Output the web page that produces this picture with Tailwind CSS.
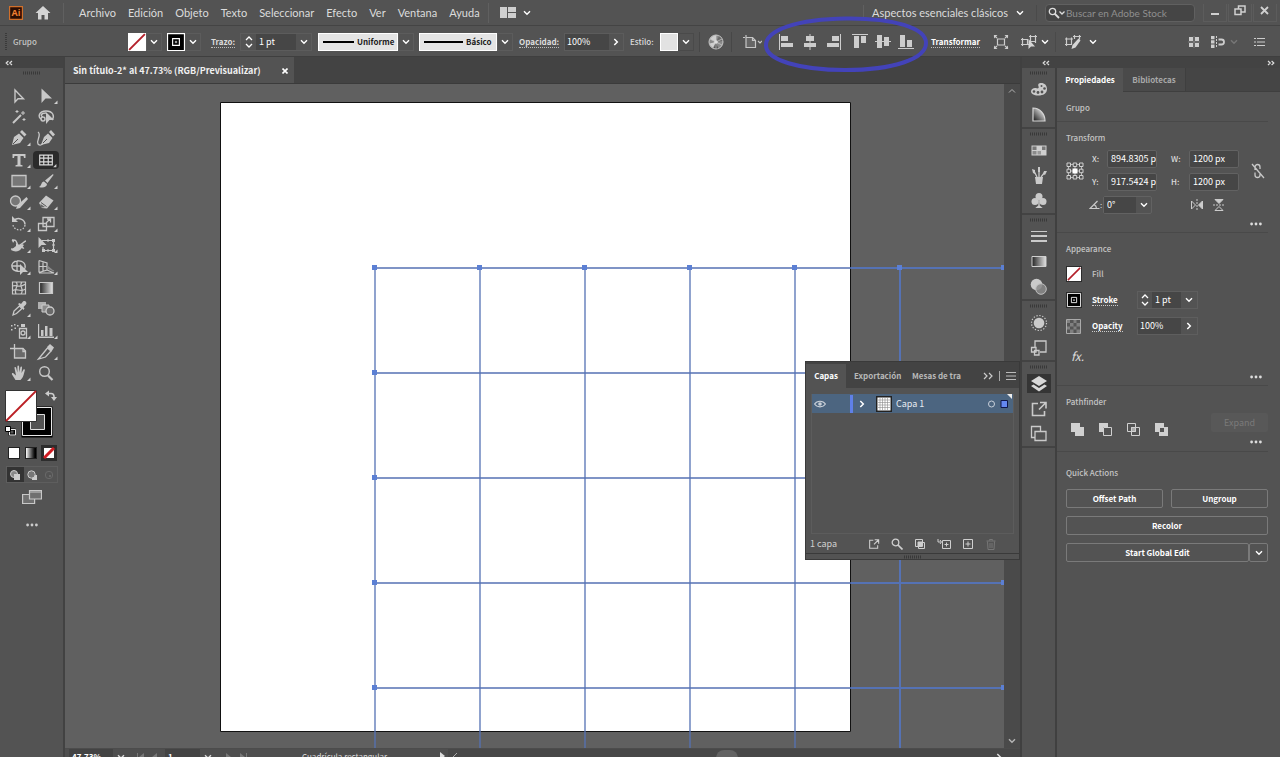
<!DOCTYPE html>
<html lang="es">
<head>
<meta charset="utf-8">
<title>Sin título-2* al 47.73% (RGB/Previsualizar)</title>
<script src="https://cdn.jsdelivr.net/npm/@tailwindcss/browser@4"></script>
</head>
<body class="h-screen overflow-hidden bg-[#535353] font-['Noto_Sans_CJK_SC','Open_Sans',sans-serif] text-[8px] leading-4 text-[#dcdcdc]">

<!-- Shared icon shapes -->
<svg class="hidden" aria-hidden="true">
  <symbol id="down" viewBox="0 0 8 6"><path d="M1 1.2 4 4.2 7 1.2" fill="none" stroke="currentColor" stroke-width="1.4"/></symbol>
  <symbol id="right" viewBox="0 0 6 8"><path d="M1.3 1 4.3 4 1.3 7" fill="none" stroke="currentColor" stroke-width="1.5"/></symbol>
  <symbol id="spin" viewBox="0 0 10 14"><path d="M2 5 5 2l3 3M2 9l3 3 3-3" fill="none" stroke="currentColor" stroke-width="1.3"/></symbol>
  <symbol id="grip" viewBox="0 0 18 4"><path d="M0 2h18" stroke="#393939" stroke-width="3" stroke-dasharray="1 1"/></symbol>
  <symbol id="dots" viewBox="0 0 12 4"><g fill="currentColor"><circle cx="1.6" cy="2" r="1.4"/><circle cx="6" cy="2" r="1.4"/><circle cx="10.4" cy="2" r="1.4"/></g></symbol>
  <symbol id="dbl" viewBox="0 0 8 6"><path d="M3.4 1 1.2 3l2.2 2M7 1 4.800 3 7 5" fill="none" stroke="currentColor" stroke-width="1.2"/></symbol>
  <symbol id="none" viewBox="0 0 16 16"><path fill="#fff" d="M0 0h16v16H0z"/><path d="M1 15 15 1" stroke="#b3202a" stroke-width="1.8"/></symbol>
  <symbol id="strk" viewBox="0 0 16 16"><path fill="#000" stroke="#fff" d="M.5.5h15v15H.5z"/><path fill="#000" stroke="#fff" d="M5 5h6v6H5z"/><path fill="#999" d="M7 7h2v2H7z"/></symbol>
  <symbol id="tri" viewBox="0 0 26 20"><path d="M24.500 14.500v3.500H21z" fill="#d0d0d0"/></symbol>
  <symbol id="export" viewBox="0 0 18 18"><path d="M8 3.500H2.500v12h12V11M10 2.500h6v6M15.500 3 9 9.500" fill="none" stroke="currentColor" stroke-width="1.600"/></symbol>
</svg>

<div class="flex h-full flex-col">

<!-- Menu bar -->
<header class="flex h-[26px] shrink-0 items-center border-b border-[#444] font-['Lato','Open_Sans',sans-serif] text-[11px]">
  <svg class="ml-[9px] h-[14px] w-[14px] shrink-0" viewBox="0 0 14 14"><path fill="#2b0d02" stroke="#d0702c" stroke-width="1.200" d="M.6.6h12.800v12.800H.6z"/><text x="7" y="10.400" text-anchor="middle" font-size="9" font-weight="700" font-family="Open Sans" fill="#f08032">Ai</text></svg>
  <button aria-label="Inicio" class="ml-3 h-4 w-4 shrink-0"><svg viewBox="0 0 16 16"><path fill="#d4d4d4" d="M8 1 .5 8H3v6.500h3.500V10h3v4.500H13V8h2.500z"/></svg></button>
  <i class="ml-3 h-5 w-px bg-[#606060]"></i>
  <nav class="ml-[15px] flex shrink-0 gap-3">
    <button>Archivo</button><button>Edición</button><button>Objeto</button><button>Texto</button><button>Seleccionar</button><button>Efecto</button><button>Ver</button><button>Ventana</button><button>Ayuda</button>
  </nav>
  <i class="ml-2 h-5 w-px bg-[#606060]"></i>
  <button aria-label="Organizar documentos" class="ml-[11px] flex items-center gap-[7px]"><svg class="h-[11px] w-[16px]" viewBox="0 0 16 11"><path fill="#cfcfcf" d="M0 0h7v11H0zM8 0h8v5H8zM8 6h8v5H8z"/></svg><svg class="h-[6px] w-2 text-white"><use href="#down"/></svg></button>
  <div class="ml-auto flex shrink-0 items-center">
    <i class="h-4 w-px bg-[#606060]"></i>
    <button class="ml-2 flex items-center gap-2"><span>Aspectos esenciales clásicos</span><svg class="h-[6px] w-2 text-white"><use href="#down"/></svg></button>
    <i class="ml-3 h-4 w-px bg-[#4a4a4a]"></i>
    <label class="ml-2 flex h-[18px] w-[150px] items-center rounded-sm border border-[#606060] bg-[#454545]">
      <svg class="ml-[2px] h-3 w-[18px] shrink-0 text-[#ddd]" viewBox="0 0 18 12" fill="none" stroke="currentColor"><circle cx="4.500" cy="4.500" r="3.200" stroke-width="1.300"/><path d="m7 7 4 4" stroke-width="1.800"/><path d="m11.500 4.500 2.500 2.500 2.500-2.500" stroke-width="1.300"/></svg>
      <input aria-label="Buscar en Adobe Stock" placeholder="Buscar en Adobe Stock" class="w-full min-w-0 text-[10px] leading-4 outline-none placeholder:text-[#8f8f8f]">
    </label>
    <div class="ml-2 mr-[3px] flex h-[18px] gap-px self-start text-[#d0d0d0]">
      <button aria-label="Minimizar" class="w-[24px] border border-t-0 border-[#5c5c5c]"><svg class="mx-auto h-4 w-4" viewBox="0 0 16 16"><path fill="currentColor" d="M4 9h8v2H4z"/></svg></button>
      <button aria-label="Restaurar" class="w-[24px] border border-t-0 border-[#5c5c5c]"><svg class="mx-auto h-4 w-4" viewBox="0 0 16 16" fill="none" stroke="currentColor" stroke-width="1.500"><path d="M3 5h6v5.500H3zM6.500 4.500V2H13v6H9.500"/></svg></button>
      <button aria-label="Cerrar" class="w-[24px] border border-t-0 border-[#5c5c5c]"><svg class="mx-auto h-4 w-4" viewBox="0 0 16 16" stroke="currentColor" stroke-width="1.800"><path d="m4 3 7 7m0-7-7 7"/></svg></button>
    </div>
  </div>
</header>

<!-- Control bar -->
<section aria-label="Control" class="relative flex h-[31px] shrink-0 items-center border-b border-[#3f3f3f] pt-[2px]">
  <svg class="ml-[5px] h-[18px] w-[2px]"><path d="M1 0v18" stroke="#3a3a3a" stroke-width="2" stroke-dasharray="1 1"/></svg>
  <span class="ml-[6px] w-[115px] shrink-0 font-medium text-[#c4c4c4]">Grupo</span>
  <button aria-label="Relleno" class="h-[18px] w-[18px] shrink-0"><svg class="h-full w-full"><use href="#none"/></svg></button>
  <button aria-label="Opciones de relleno" class="flex h-[18px] w-4 shrink-0 items-center justify-center border border-[#5c5c5c]"><svg class="h-[6px] w-2 text-white"><use href="#down"/></svg></button>
  <button aria-label="Trazo" class="ml-[5px] h-[18px] w-[18px] shrink-0"><svg class="h-full w-full"><use href="#strk"/></svg></button>
  <button aria-label="Opciones de trazo" class="flex h-[18px] w-4 shrink-0 items-center justify-center border border-[#5c5c5c]"><svg class="h-[6px] w-2 text-white"><use href="#down"/></svg></button>
  <label for="stroke-w" class="ml-[10px] w-[29px] shrink-0 font-bold leading-3"><span class="border-b border-dotted border-[#bbb]">Trazo:</span></label>
  <div class="flex h-[18px] shrink-0 items-center border border-[#5c5c5c]">
    <button aria-label="Ajustar grosor" class="w-[15px]"><svg class="mx-auto h-[14px] w-[10px] text-white"><use href="#spin"/></svg></button>
    <input id="stroke-w" value="1 pt" class="h-4 w-[40px] bg-[#464646] pl-[3px] text-[9px] text-white">
    <button aria-label="Lista de grosores" class="flex w-[15px] justify-center"><svg class="h-[6px] w-2 text-white"><use href="#down"/></svg></button>
  </div>
  <button class="ml-[6px] flex h-[18px] w-[80px] shrink-0 items-center gap-[3px] border border-white bg-[#e4e4e4] pl-1 font-bold text-[#1c1c1c]"><i class="h-[2px] w-[31px] bg-black"></i>Uniforme</button>
  <button aria-label="Perfil" class="flex h-[18px] w-4 shrink-0 items-center justify-center border border-[#5c5c5c]"><svg class="h-[6px] w-2 text-white"><use href="#down"/></svg></button>
  <button class="ml-[5px] flex h-[18px] w-[78px] shrink-0 items-center gap-[3px] border border-white bg-[#e4e4e4] pl-1 font-bold text-[#1c1c1c]"><i class="h-[2px] w-[39px] bg-black"></i>Básico</button>
  <button aria-label="Pincel" class="flex h-[18px] w-4 shrink-0 items-center justify-center border border-[#5c5c5c]"><svg class="h-[6px] w-2 text-white"><use href="#down"/></svg></button>
  <label for="opac" class="ml-[6px] w-[45px] shrink-0 font-bold leading-3"><span class="border-b border-dotted border-[#bbb]">Opacidad:</span></label>
  <div class="flex h-[18px] shrink-0 items-center border border-[#5c5c5c]">
    <input id="opac" value="100%" class="h-4 w-[44px] bg-[#464646] pl-[2px] text-[9px] text-white">
    <button aria-label="Control de opacidad" class="flex w-[14px] justify-center"><svg class="h-2 w-[6px] text-white"><use href="#right"/></svg></button>
  </div>
  <span class="ml-[6px] w-[30px] shrink-0 font-medium">Estilo:</span>
  <button aria-label="Estilo" class="h-[18px] w-[18px] shrink-0 border border-white bg-[#e2e2e2]"></button>
  <button aria-label="Lista de estilos" class="flex h-[18px] w-4 shrink-0 items-center justify-center border border-[#4a4a4a]"><svg class="h-[6px] w-2 text-white"><use href="#down"/></svg></button>
  <i class="ml-[5px] h-5 w-px bg-[#474747]"></i>
  <button aria-label="Volver a colorear" class="ml-2 h-4 w-4 shrink-0"><svg viewBox="0 0 16 16"><circle cx="8" cy="8" r="7" fill="#8a8a8a" stroke="#c6c6c6"/><path d="M8 8 8 1.500A6.500 6.500 0 0 0 2.300 5zM8 8 1.700 9.500A6.500 6.500 0 0 0 5 13.800z" fill="#cfcfcf"/><path d="M8 8 11 2.200A6.500 6.500 0 0 1 14.500 7z" fill="#6a6a6a"/><path d="M8 8l2 6.200A6.500 6.500 0 0 1 6 14z" fill="#4d4d4d"/><path d="M2 5l12 6M2 11l12-6M8 1v14" stroke="#d0d0d0" stroke-width=".7"/><circle cx="8" cy="8" r="1.800" fill="#ddd"/></svg></button>
  <i class="ml-[7px] h-5 w-px bg-[#474747]"></i>
  <button aria-label="Transformar" class="ml-[10px] h-4 w-5 shrink-0"><svg viewBox="0 0 20 16" fill="none" stroke="#c6c6c6" stroke-width="1.200"><path d="M4 1v2M1 3.500h2M4 3.500h6.500l3 3v7H4z" fill="#666"/><path d="M10.500 3.500v3h3"/><path d="m16 7 2 2 2-2"/></svg></button>
  <div class="ml-4 flex shrink-0 gap-2">
    <button aria-label="Alinear a la izquierda" class="h-4 w-4"><svg viewBox="0 0 16 16" fill="#cdcdcd"><path d="M1 0h1v16H1zM3 2h7v5H3zM3 9h12v4H3z"/></svg></button>
    <button aria-label="Centrar horizontalmente" class="h-4 w-4"><svg viewBox="0 0 16 16" fill="#cdcdcd"><path d="M7.500 0h1v16h-1zM4 2h8v5H4zM2 9h12v4H2z"/></svg></button>
    <button aria-label="Alinear a la derecha" class="h-4 w-4"><svg viewBox="0 0 16 16" fill="#cdcdcd"><path d="M14 0h1v16h-1zM6 2h7v5H6zM1 9h12v4H1z"/></svg></button>
  </div>
  <div class="ml-[10px] flex shrink-0 gap-[7px]">
    <button aria-label="Alinear arriba" class="h-4 w-4"><svg viewBox="0 0 16 16" fill="#cdcdcd"><path d="M0 0h16v1H0zM2 2h5v12H2zM9 2h5v7H9z"/></svg></button>
    <button aria-label="Centrar verticalmente" class="h-4 w-4"><svg viewBox="0 0 16 16" fill="#cdcdcd"><path d="M0 7h16v1H0zM2 1h5v13H2zM9 3h5v9H9z"/></svg></button>
    <button aria-label="Alinear abajo" class="h-4 w-4"><svg viewBox="0 0 16 16" fill="#cdcdcd"><path d="M0 14h16v1H0zM2 1h5v12H2zM9 6h5v7H9z"/></svg></button>
  </div>
  <button class="ml-[17px] w-[48px] shrink-0 text-left font-bold leading-3 text-white"><span class="border-b border-dotted border-[#bbb]">Transformar</span></button>
  <button aria-label="Aislar" class="ml-[14px] h-4 w-4 shrink-0"><svg viewBox="0 0 16 16" fill="none" stroke="#cdcdcd" stroke-width="1.200"><path d="M4.500 5h7v6h-7z"/><path d="M1 1.500l3 2.500M15 1.500 12 4M1 14.500 4 12M15 14.500 12 12"/><path d="M1 1h3.500L1 4.500zM15 1h-3.500L15 4.500zM1 15h3.500L1 11.500zM15 15h-3.500l3.500-3.500z" fill="#cdcdcd" stroke="none"/></svg></button>
  <button aria-label="Seleccionar similares" class="ml-3 flex shrink-0 items-center gap-1"><svg class="h-4 w-4" viewBox="0 0 16 16" fill="none" stroke="#cdcdcd" stroke-width="1.200"><path d="M1.500 5.500h5v5h-5zM0 5.500h2M0 10.500h8M1.500 4v8M9.500 2.500h5v5h-5zM8 2.500h8M9.500 1v3M14.500 1v8"/><path d="M7.500 5v10l2.500-2.500h4z" fill="#d6d6d6" stroke="none"/></svg><svg class="h-[6px] w-2 text-white"><use href="#down"/></svg></button>
  <i class="ml-[6px] h-5 w-px bg-[#4a4a4a]"></i>
  <button aria-label="Editar similares" class="ml-[9px] flex shrink-0 items-center gap-2"><svg class="h-4 w-4" viewBox="0 0 16 16" fill="none" stroke="#cdcdcd" stroke-width="1.200"><path d="M1.500 5h5v5.500h-5zM0 5h8M0 10.500h6M1.500 3.500V12M9.500 2.500h5v3M9.500 1v4M14.500 1v3M8 2.500h8M6.500 3.500V8"/><path d="M13.500 4.500 7.500 11 6.500 15l4-1.500 5-7z" fill="#d6d6d6" stroke="none"/></svg><svg class="h-[6px] w-2 text-white"><use href="#down"/></svg></button>
  <div class="ml-auto mr-[15px] flex shrink-0 items-center text-[#cdcdcd]">
    <button aria-label="Ajustar a cuadrícula" class="h-3 w-3"><svg viewBox="0 0 12 12" fill="currentColor"><path d="M1 1h4v4H1zM7 1h4v4H7zM1 7h4v4H1zM7 7h4v4H7z"/><path d="M0 6h12M6 0v12" stroke="#9a9a9a" stroke-width=".6"/></svg></button>
    <button aria-label="Ajustar a píxel" class="ml-[11px] h-3 w-[14px]"><svg viewBox="0 0 14 12" fill="currentColor"><path d="M0 0h3.500v3.300H0zM0 4.300h3.500v3.300H0zM0 8.600h3.500V12H0z"/><path d="M5.500 0v12" stroke="currentColor" stroke-dasharray="2 1"/><path d="M7.500 3.500h3a2.500 2.500 0 0 1 0 5h-3" fill="none" stroke="currentColor" stroke-width="1.800"/></svg></button>
    <svg class="ml-[5px] h-[6px] w-2 text-[#777]"><use href="#down"/></svg>
    <button aria-label="Menú del panel" class="ml-4 h-[10px] w-[11px]"><svg viewBox="0 0 11 10" stroke="currentColor" stroke-width="1.200"><path d="M0 1.500h2M3 1.500h8M0 5h2M3 5h8M0 8.500h2M3 8.500h8"/></svg></button>
  </div>
  <!-- Hand-drawn highlight round the align buttons -->
  <svg class="pointer-events-none absolute -top-[11px] left-[762px] z-20 h-[58px] w-[168px]" viewBox="0 0 168 58" fill="none"><path d="M4 31C3 15 36 4 84 3.500 132 3 164 13 164 28c0 16-33 27-81 27C37 55 5 45 4 31z" stroke="#4343b9" stroke-width="4"/></svg>
</section>

<main class="flex min-h-0 flex-1">

<!-- Tools -->
<aside aria-label="Herramientas" class="flex w-[65px] shrink-0 flex-col border-r-2 border-[#424242]">
  <div class="flex h-[11px] shrink-0 items-center bg-[#434343] pl-[5px]"><svg class="h-[6px] w-2 text-[#ddd]"><use href="#dbl"/></svg></div>
  <svg class="mx-auto mt-[3px] h-1 w-[18px] shrink-0"><use href="#grip"/></svg>
  <div class="mt-[10px] grid h-[299px] shrink-0 grid-cols-[27px_27px] grid-rows-14 pl-[5px] text-[#c8c8c8] [&_svg]:h-5 [&_svg]:w-[26px] [&_button]:flex [&_button]:items-center [&_button]:justify-center">
    <button aria-label="Selección"><svg viewBox="0 0 26 20"><path d="M9 4v12l3-3.200h5.500z" fill="none" stroke="currentColor" stroke-width="1.400"/></svg></button>
    <button aria-label="Selección directa"><svg viewBox="0 0 26 20"><path d="M8.500 2.500v14.500l4-4.500h6.500z" fill="currentColor"/><use href="#tri"/></svg></button>
    <button aria-label="Varita mágica"><svg viewBox="0 0 26 20" stroke="currentColor"><path d="M7 16 15 8" stroke-width="2"/><path d="M17 4v4M15 6h4M11 3v3M9.500 4.500h3M18 11v3M16.500 12.500h3" stroke-width="1"/></svg></button>
    <button aria-label="Lazo"><svg viewBox="0 0 26 20"><path d="M9 13c-5-3-3-9 4-9s9 5 6 9M10 10a2 2 0 1 0 0 4 2 2 0 0 0 0-4c-3-1-2-4 3-4" fill="none" stroke="currentColor" stroke-width="1.400"/><path d="M13 5v12l3.500-4H21z" fill="currentColor"/></svg></button>
    <button aria-label="Pluma"><svg viewBox="0 0 26 20"><path d="m6 17 2-8 5-3.500 4.500 4.500-3.500 5zM14 4l2-2 4.500 4.500-2 2z" fill="currentColor"/><path d="m7 16 5-5" stroke="#535353"/><use href="#tri"/></svg></button>
    <button aria-label="Curvatura"><svg viewBox="0 0 26 20"><path d="m8 17 3-8 4-3.500 4.500 4.500-3.500 5zM16 4l2-2 4 4.500-2 2z" fill="currentColor"/><path d="m9 16 5-5" stroke="#535353"/><path d="M5 4c4 3-2 8 0 12 2 2 4 1 5-1" fill="none" stroke="currentColor" stroke-width="1.300"/></svg></button>
    <button aria-label="Texto"><svg viewBox="0 0 26 20"><path d="M6.500 4h13v4H18l-.5-2H14.500v8.800l2 .4V16.500h-7v-1.300l2-.4V6H8.500L8 8H6.500z" fill="currentColor"/><use href="#tri"/></svg></button>
    <button aria-label="Cuadrícula rectangular" aria-pressed="true" class="flex"><svg class="h-[18px]! rounded-sm bg-[#2b2b2b]" viewBox="0 0 26 20"><path d="M6 4.500h14v11H6zM10.500 4.500v11M15.500 4.500v11M6 8h14M6 12h14" fill="none" stroke="#dcdcdc" stroke-width="1.300"/><use href="#tri"/></svg></button>
    <button aria-label="Rectángulo"><svg viewBox="0 0 26 20"><path d="M6 4.500h14v11H6z" fill="#777" stroke="currentColor" stroke-width="1.300"/><use href="#tri"/></svg></button>
    <button aria-label="Pincel"><svg viewBox="0 0 26 20"><path d="M20 3 12 9.500l2.500 2.500L20.500 4zM11 10.500c-3 0-2 4-5 5.500 4 1.500 8 0 8-3z" fill="currentColor"/><use href="#tri"/></svg></button>
    <button aria-label="Shaper"><svg viewBox="0 0 26 20"><circle cx="9.500" cy="9" r="5" fill="#777" stroke="currentColor" stroke-width="1.300"/><path d="m20.500 5-9 8-1.500 4 4-1 8-9z" fill="currentColor"/><use href="#tri"/></svg></button>
    <button aria-label="Borrador"><svg viewBox="0 0 26 20"><path d="m6 11 7-7.500 7.500 5L14 16.500 9 16z" fill="currentColor"/><path d="m8 10.500 5.500 4" stroke="#535353"/><path d="m7.500 12 4.500 3-2.500.500-2-1z" fill="#666"/><use href="#tri"/></svg></button>
    <button aria-label="Rotar"><svg viewBox="0 0 26 20" fill="none" stroke="currentColor"><path d="M8 6.500c4-4 11-1 11 4" stroke-width="1.500"/><path d="M19 11c-1 7-11 6-12 0" stroke-width="1.300" stroke-dasharray="1.500 1.500"/><path d="M6 2v6h6z" fill="currentColor" stroke="none"/><use href="#tri" stroke="none"/></svg></button>
    <button aria-label="Escala"><svg viewBox="0 0 26 20" fill="none" stroke="currentColor" stroke-width="1.300"><path d="M10 3.500h11v9H10z"/><path d="M5.500 9.500h8v7h-8z"/><path d="m13 9 4-4M14 5h3.500v3.500"/><use href="#tri" stroke="none"/></svg></button>
    <button aria-label="Anchura"><svg viewBox="0 0 26 20"><path d="M6 6c5-3 4 2 6 4s6-4 8-4M5 14c6 1 7-2 9-3s2 3 4 2" fill="none" stroke="currentColor" stroke-width="1.400"/><path d="M5 15c3 2 8 2 10-1l3-4-2-1-3 2-2-2-1-1 0 3zM6 4l3 1-2 3z" fill="currentColor"/><use href="#tri"/></svg></button>
    <button aria-label="Transformación libre"><svg viewBox="0 0 26 20"><path d="M9 5.500h11.500v10H10V12" fill="none" stroke="currentColor" stroke-width="1.200"/><path d="M5.500 2v11l3-3h5z" fill="currentColor"/><path d="M19 4h3v3h-3zM19 14h3v3h-3zM9 14h3v3H9zM14 14.500h2v2h-2zM19.500 9h2v2h-2zM14 4.500h2v2h-2z" fill="currentColor"/><use href="#tri"/></svg></button>
    <button aria-label="Creador de formas"><svg viewBox="0 0 26 20"><path d="M11 4c6-1 9 3 8 7-3 5-12 4-13-1-1-3 2-6 5-6zM6 9h9M11 4v10" fill="none" stroke="currentColor" stroke-width="1.300"/><path d="M14 7v11l3-3h5z" fill="currentColor"/><use href="#tri"/></svg></button>
    <button aria-label="Perspectiva"><svg viewBox="0 0 26 20" fill="none" stroke="currentColor" stroke-width="1.200"><path d="M6 3.500v12M6 3.500l8 2.500v7l-8 2.500M10 4.500v10M6 9.500h8M14 13l7 3H6"/><path d="M14 9l5 4M14 11l7 3" stroke="#8a8a8a"/><use href="#tri" stroke="none"/></svg></button>
    <button aria-label="Malla"><svg viewBox="0 0 26 20" fill="none" stroke="currentColor" stroke-width="1.200"><path d="M6.500 4h13v12h-13zM6.500 8c5-2 6 3 13-2M6.500 13c3-4 8 2 13-2M10 4c4 4-3 7 0 12M16 4c-4 4 3 7-1 12"/></svg></button>
    <button aria-label="Degradado"><svg viewBox="0 0 26 20"><defs><linearGradient id="g1"><stop stop-color="#222"/><stop offset="1" stop-color="#e4e4e4"/></linearGradient></defs><path d="M6.500 4.500h13v11h-13z" fill="url(#g1)" stroke="currentColor" stroke-width="1.200"/></svg></button>
    <button aria-label="Cuentagotas"><svg viewBox="0 0 26 20"><path d="m7 16 1-4 5.500-5 2.500 2.500-5.500 5z" fill="none" stroke="currentColor" stroke-width="1.300"/><path d="m12 5 1.500-1 1.500 1 2-2.500c2-1.500 4.500 1 3 3L17.500 8l1 1.500-1 1.500z" fill="currentColor"/><use href="#tri"/></svg></button>
    <button aria-label="Fusión"><svg viewBox="0 0 26 20"><path d="M5 3h8v7H5z" fill="#b0b0b0"/><path d="M9 6h7v7H9z" fill="#8a8a8a" stroke="#ccc"/><circle cx="17" cy="12" r="4" fill="#6a6a6a" stroke="#ccc" stroke-width="1.300"/></svg></button>
    <button aria-label="Rociar símbolos"><svg viewBox="0 0 26 20"><path d="M5 4h1.500v1.500H5zM8 3h1.500v1.500H8zM5 8h1.500v1.500H5zM8.500 6.500H10V8H8.500zM11 4h1.500v1.500H11zM15 3h4v3h-4z" fill="currentColor"/><path d="M13.500 7.500h7v9.500h-7z" fill="none" stroke="currentColor" stroke-width="1.300"/><circle cx="17" cy="12" r="2" fill="none" stroke="currentColor" stroke-width="1.300"/><use href="#tri"/></svg></button>
    <button aria-label="Gráfica"><svg viewBox="0 0 26 20" fill="currentColor"><path d="M5 3h1.200v12.500H21V17H5zM8 9h2.500v6H8zM12 5h2.500v10H12zM16.500 7h3v8h-3z"/><use href="#tri"/></svg></button>
    <button aria-label="Mesa de trabajo"><svg viewBox="0 0 26 20" fill="none" stroke="currentColor" stroke-width="1.300"><path d="M8.500 6.500H17l2.500 2.500v7h-11z" fill="#6a6a6a"/><path d="M8.500 2v4.500H4M17 6.500v3h3"/></svg></button>
    <button aria-label="Sector"><svg viewBox="0 0 26 20"><path d="m5.500 17 9-11 3.500 3-5.500 6z" fill="none" stroke="currentColor" stroke-width="1.300"/><path d="m14 5 3-3 4 3.500-2.500 4z" fill="currentColor"/><use href="#tri"/></svg></button>
    <button aria-label="Mano"><svg viewBox="0 0 26 20"><path d="M9.500 17 6 11.500c-.6-1.200.7-2 1.600-1L10 12.500 8.500 5c-.2-1.300 1.300-1.500 1.600-.3l1.300 4.800V3.500c0-1.200 1.600-1.200 1.700 0l.3 5.800 1-5c.3-1.100 1.700-.8 1.600.4l-.5 5.300 1.800-3.200c.7-1 1.900-.3 1.500.8-1 3.400-1.500 7.400-4.300 9.400z" fill="currentColor"/><use href="#tri"/></svg></button>
    <button aria-label="Zoom"><svg viewBox="0 0 26 20" fill="none" stroke="currentColor"><circle cx="11.500" cy="8.500" r="4.800" stroke-width="1.400"/><path d="m15 12.500 4.500 4.500" stroke-width="2.200"/></svg></button>
  </div>
  <!-- Fill, stroke, colour, draw and screen modes -->
  <svg class="mt-[5px] h-[50px] w-[62px] shrink-0" viewBox="0 0 62 50" role="img" aria-label="Relleno y trazo"><path fill="#000" d="M21.500 17.500h31v31h-31z"/><path d="M22.500 18.500h29v28h-29z" fill="#000" stroke="#e8e8e8"/><path fill="#535353" stroke="#ddd" d="M30.500 25.500h14v15h-14z"/><path fill="#fff" stroke="#333" d="M5.500 1.500h31v31h-31z"/><path d="M6 32 36 2" stroke="#bb1f24" stroke-width="1.800"/><path d="M47 4.500h4q3 0 3 3V9" fill="none" stroke="#ccc" stroke-width="1.600"/><path d="M49 1.500v6l-4-3zM51 8h6l-3 4z" fill="#ccc"/><path d="M9.500 40.500h5v5h-5z" fill="none" stroke="#000" stroke-width="2"/><path d="M5.500 37.500h5v5h-5z" fill="#fff" stroke="#000"/><path d="M11 40.500h4.500v5.500h-6v-3" fill="none" stroke="#eee"/></svg>
  <div class="ml-[5px] mt-[5px] grid h-[18px] w-[53px] shrink-0 grid-cols-3 place-items-center">
    <button aria-label="Color" class="h-3 w-3 border border-[#222] bg-white"></button>
    <button aria-label="Degradado" class="h-3 w-3 border border-[#222] bg-linear-to-r from-white to-black"></button>
    <button aria-label="Ninguno" class="flex h-4 w-4 items-center justify-center bg-[#2d2d2d]"><svg class="h-3 w-3" viewBox="0 0 12 12"><path fill="#fff" d="M1 1h10v10H1z"/><path d="m1 11 10-10" stroke="#d01c22" stroke-width="3"/></svg></button>
  </div>
  <div class="ml-[6px] mt-1 grid h-[17px] w-[52px] shrink-0 grid-cols-3 border border-[#5e5e5e] [&_svg]:mx-auto [&_svg]:h-[14px] [&_svg]:w-[14px]">
    <button aria-label="Dibujo normal" class="bg-[#333]"><svg viewBox="0 0 14 14"><circle cx="6" cy="6" r="3.500" fill="#888" stroke="#ccc"/><path fill="#ccc" d="M6 6h6v6H6z"/></svg></button>
    <button aria-label="Dibujo por detrás"><svg viewBox="0 0 14 14"><path fill="#ccc" d="M7 7h5v5H7z"/><circle cx="6.500" cy="6.500" r="3.700" fill="#777" stroke="#ccc"/></svg></button>
    <button aria-label="Dibujo por dentro"><svg viewBox="0 0 14 14"><circle cx="7" cy="7" r="3.700" fill="none" stroke="#696969"/><path fill="#696969" d="M7 7h2v2H7z"/></svg></button>
  </div>
  <button aria-label="Modo de pantalla" class="mx-auto mt-[6px] h-4 w-5"><svg viewBox="0 0 20 16" fill="#707070" stroke="#c8c8c8" stroke-width="1.200"><path d="M.6 5.500h12v9H.6z"/><path d="M7.500 1.500h12v8.500h-12zM7.500 3h12"/></svg></button>
  <button aria-label="Editar barra de herramientas" class="mx-auto mt-[18px] h-1 w-3 text-[#ccc]"><svg class="h-1 w-3"><use href="#dots"/></svg></button>
</aside>

<!-- Document -->
<section class="flex min-w-0 flex-1 flex-col">
  <div class="flex h-[27px] shrink-0 items-center border-b border-[#3b3b3b] bg-[#434343]">
    <div class="flex h-full items-center bg-[#535353] pl-2 pr-[6px] pt-[2px] text-[9px] font-bold text-[#f0f0f0]"><button class="w-[209px] whitespace-nowrap text-left">Sin título-2* al 47.73% (RGB/Previsualizar)</button><button aria-label="Cerrar documento" class="flex h-3 w-[6px] items-center"><svg class="h-[6px] w-[6px]" viewBox="0 0 6 6" stroke="#fff" stroke-width="1.600"><path d="m.5.5 5 5m0-5-5 5"/></svg></button></div>
  </div>
  <div class="relative flex min-h-0 flex-1">
    <svg class="h-full min-w-0 flex-1 bg-[#606060]" role="img" aria-label="Mesa de trabajo con cuadrícula rectangular">
      <path d="M155.500 18.500h630v629h-630z" fill="#fff" stroke="#111"/>
      <g stroke="#5572b4" stroke-width="1.300" fill="none">
        <path d="M310 184h630M310 289h630M310 394h630M310 499h630M310 604h630"/>
        <path d="M310 184v480M415 184v480M520 184v480M625 184v480M730 184v480"/>
        <path d="M835 184v480M786 184h154M786 499h154M786 604h154" stroke-width="2"/>
      </g>
      <path fill="#5c80d4" d="M307 181h5v5h-5zM412 181h5v5h-5zM517 181h5v5h-5zM622 181h5v5h-5zM727 181h5v5h-5zM832 181h5v5h-5zM936 181h5v5h-5zM307 286h5v5h-5zM307 391h5v5h-5zM307 496h5v5h-5zM307 601h5v5h-5zM936 496h5v5h-5zM936 601h5v5h-5z"/>
    </svg>
    <div class="flex w-4 shrink-0 flex-col items-center justify-between bg-[#4a4a4a] py-1 text-[#b5b5b5]">
      <button aria-label="Desplazar arriba" class="flex"><svg class="h-[6px] w-2" viewBox="0 0 8 6"><path d="m1 4.500 3-3 3 3" fill="none" stroke="currentColor"/></svg></button>
      <button aria-label="Desplazar abajo" class="flex"><svg class="h-[6px] w-2"><use href="#down"/></svg></button>
    </div>

    <!-- Layers, floating over the canvas -->
    <section aria-label="Capas" class="absolute right-0 top-[277px] z-10 w-[215px] border border-[#3a3a3a] bg-[#535353]">
      <div class="flex h-[26px] items-center bg-[#434343] pt-[2px] font-bold text-[#b8b8b8]">
        <button class="h-full w-10 shrink-0 bg-[#535353] text-white">Capas</button>
        <button class="ml-2 w-[51px] shrink-0 whitespace-nowrap text-left">Exportación</button>
        <button aria-label="Mesas de trabajo" class="ml-[7px] w-[51px] shrink-0 whitespace-nowrap text-left">Mesas de tra</button>
        <svg class="ml-5 h-2 w-[10px] shrink-0" viewBox="0 0 10 8" fill="none" stroke="#ccc" stroke-width="1.200"><path d="m1 1 3 3-3 3M6 1l3 3-3 3"/></svg>
        <i class="ml-[6px] h-[10px] w-px bg-[#aaa]"></i>
        <button aria-label="Menú de capas" class="ml-[6px] h-2 w-[10px]"><svg viewBox="0 0 10 8" stroke="#bbb"><path d="M0 .5h10M0 4h10M0 7.500h10"/></svg></button>
      </div>
      <div class="mx-[5px] mt-[6px] h-[140px] border border-t-0 border-[#5c5c5c]">
        <div class="relative flex h-[19px] items-center bg-[#4c6580] text-[9px] text-[#e6eaf0]">
          <button aria-label="Visibilidad" class="ml-[2px] h-2 w-3"><svg viewBox="0 0 12 8"><path d="M.6 4C3 .3 9 .3 11.400 4 9 7.700 3 7.700.6 4z" fill="none" stroke="#c9d0d8" stroke-width="1.200"/><circle cx="6" cy="4" r="1.800" fill="#c9d0d8"/></svg></button>
          <i class="ml-[24px] h-[18px] w-[3px] bg-[#5f80e8]"></i>
          <button aria-label="Expandir capa" class="ml-[6px] flex h-2 w-[6px]"><svg class="h-2 w-[6px] text-white"><use href="#right"/></svg></button>
          <svg class="ml-[11px] h-4 w-4" viewBox="0 0 16 16"><path fill="#fff" stroke="#222" stroke-width="1.500" d="M.7.7h14.600v14.600H.7z"/><path d="M4 2v12M6.500 2v12M9 2v12M11.500 2v12M2 4h12M2 6.500h12M2 9h12M2 11.500h12" stroke="#8a8a8a" stroke-width=".6"/></svg>
          <span class="ml-1">Capa 1</span>
          <svg class="ml-auto mr-[5px] h-2 w-5" viewBox="0 0 20 8"><circle cx="3.500" cy="4" r="3" fill="none" stroke="#c8d0da"/><path fill="#6488f0" stroke="#10184a" d="M13 .5h6.500v7H13z"/></svg>
          <svg class="absolute right-0 top-0 h-[6px] w-[6px]"><path fill="#eee" d="M0 0h5v5z"/></svg>
        </div>
      </div>
      <div class="flex h-[19px] items-center pl-1 text-[#cfcfcf]">
        <span class="w-[58px] shrink-0 text-[9px]">1 capa</span>
        <div class="flex items-center gap-[11px] [&_svg]:h-3 [&_svg]:w-3" >
          <button aria-label="Recopilar para exportación"><svg><use href="#export"/></svg></button>
          <button aria-label="Localizar objeto"><svg viewBox="0 0 12 12" fill="none" stroke="currentColor"><circle cx="4.500" cy="4.500" r="3.300" stroke-width="1.300"/><path d="m7 7 4.500 4.500" stroke-width="1.700"/></svg></button>
          <button aria-label="Máscara de recorte"><svg viewBox="0 0 12 12" fill="none" stroke="currentColor"><path d="M1.500 1.500h7v7h-7z"/><path d="M4.500 4.500h6v6h-6z"/><path fill="currentColor" d="M4 4h4v4H4z"/></svg></button>
          <button aria-label="Nueva subcapa"><svg class="w-[14px]!" viewBox="0 0 14 12" fill="none" stroke="currentColor"><path d="M5.500 2.500h8v8h-8zM9.500 4.500v4M7.500 6.500h4M1 1v3h3M3 2l1.500 2L3 6"/></svg></button>
          <button aria-label="Nueva capa"><svg viewBox="0 0 12 12" fill="none" stroke="currentColor"><path d="M1.500 1.500h9v9h-9zM6 3.500v5M3.500 6h5"/></svg></button>
          <button aria-label="Eliminar" disabled class="text-[#777]"><svg viewBox="0 0 12 12" fill="none" stroke="currentColor"><path d="M1.500 3h9M4.500 2.500v-1h3v1M2.500 3.500l.5 8h6l.5-8M5 5v5M7 5v5"/></svg></button>
        </div>
      </div>
      <div class="flex h-[6px] items-center border-t border-[#3a3a3a]"><svg class="mx-auto h-1 w-[18px]"><use href="#grip"/></svg></div>
    </section>
  </div>
  <footer class="flex h-[9px] shrink-0 items-start overflow-hidden border-t border-[#4c4c4c] bg-[#4e4e4e]">
    <input aria-label="Nivel de zoom" value="47.73%" class="ml-1 h-4 w-[44px] bg-[#434343] pl-[3px] font-bold text-white">
    <svg class="ml-1 mt-[5px] h-[6px] w-2 shrink-0"><use href="#down"/></svg>
    <span class="ml-3 w-[26px] shrink-0 text-[#777]"><svg class="mt-1 h-2 w-[22px]" viewBox="0 0 22 8" fill="currentColor"><path d="M0 0h1v8H0zM7 0v8L2 4zM20 0v8l-5-4z"/></svg></span>
    <input aria-label="Mesa de trabajo" value="1" class="ml-[2px] h-4 w-[35px] bg-[#434343] pl-[3px] font-bold text-white">
    <svg class="ml-1 mt-[5px] h-[6px] w-2 shrink-0"><use href="#down"/></svg>
    <svg class="ml-[14px] mt-1 h-2 w-[22px] shrink-0" viewBox="0 0 22 8" fill="#777"><path d="M0 0v8l5-4zM14 0v8l5-4zM20 0h1v8h-1z"/></svg>
    <span class="ml-[54px] w-[136px] shrink-0 whitespace-nowrap text-[#ddd]">Cuadrícula rectangular</span>
    <svg class="mt-[3px] h-2 w-[10px] shrink-0"><path d="M2 0v8l5-4z" fill="#ddd"/></svg>
    <div class="flex h-full min-w-0 flex-1 items-start bg-[#484848] pl-1">
      <svg class="mt-1 h-2 w-[6px]"><path d="M5 0 1 4l4 4" fill="none" stroke="#aaa"/></svg>
      <i class="ml-auto mr-[258px] mt-px h-4 w-[22px] rounded-full bg-[#626262]"></i>
      <svg class="mr-[18px] mt-1 h-2 w-[6px]"><use href="#right"/></svg>
    </div>
  </footer>
</section>

<!-- Dock and properties -->
<div class="flex w-[260px] shrink-0 flex-col border-l-2 border-[#404040]">
  <div class="flex h-[11px] shrink-0 items-center justify-between bg-[#434343] pl-5 pr-[5px] text-[#ddd]"><svg class="h-[6px] w-2"><use href="#dbl"/></svg><svg class="h-[6px] w-2" viewBox="0 0 8 6"><path d="m1 1 2.200 2L1 5M4.600 1l2.200 2-2.200 2" fill="none" stroke="currentColor" stroke-width="1.200"/></svg></div>
  <div class="flex min-h-0 flex-1">
    <aside aria-label="Paneles" class="w-[35px] shrink-0 border-r-2 border-[#404040] text-[#cacaca] [&_button]:mx-auto [&_button]:flex [&_button]:h-[25px] [&_button]:w-6 [&_button]:items-center [&_button]:justify-center [&_button_svg]:h-[18px] [&_button_svg]:w-[18px] [&>div]:border-b-2 [&>div]:border-[#434343]">
      <div>
        <div class="h-[9px] pt-[3px]"><svg class="mx-auto h-1 w-[18px]"><use href="#grip"/></svg></div>
        <button aria-label="Color"><svg viewBox="0 0 18 18"><path d="M9 2.500c4-1.500 8 1 8 5.500s-4 6.500-8.500 6.500c-5 0-7.500-2-7.500-4S3 7 5 7s2.500 1 3.500 0-1.500-3 .5-4.500z" fill="currentColor"/><g fill="#535353"><circle cx="4" cy="10.500" r="1.300"/><circle cx="8" cy="11.500" r="1.400"/><circle cx="12" cy="11" r="1.400"/><circle cx="14.500" cy="7.500" r="1.300"/><circle cx="11.500" cy="5" r="1"/></g></svg></button>
        <button aria-label="Guía de color"><svg viewBox="0 0 18 18"><defs><linearGradient id="g2" x1="0" y1="1" x2="1" y2="0"><stop stop-color="#111"/><stop offset=".8" stop-color="#ddd"/></linearGradient></defs><path d="M3 2c7 0 12 6 12 13H3z" fill="url(#g2)" stroke="#d6d6d6" stroke-width="1.200"/></svg></button>
      </div>
      <div>
        <div class="h-[9px] pt-[3px]"><svg class="mx-auto h-1 w-[18px]"><use href="#grip"/></svg></div>
        <button aria-label="Muestras"><svg viewBox="0 0 18 18"><path d="M1.500 3.500h15v10h-15z" fill="#cfcfcf"/><path fill="#777" d="M2.500 4.500h4v3.500h-4zM12 4.500h3.500v3.500H12z"/><path fill="#999" d="M7.500 9h3.500v3.500H7.500z"/><path fill="#8a8a8a" d="M2.500 9h4v3.500h-4z"/></svg></button>
        <button aria-label="Pinceles"><svg viewBox="0 0 18 18"><path d="M5 10h8l-1 7H6z" fill="currentColor"/><path d="M7 10 4 4M9 10V3M11 10l4-5" stroke="currentColor" stroke-width="1.300"/><path d="M2 2l3 1v4L3 6zM8 0h2v5H8zM14 4l3 0-2 4-2-1z" fill="currentColor"/></svg></button>
        <button aria-label="Símbolos"><svg viewBox="0 0 18 18" fill="currentColor"><circle cx="9" cy="4.500" r="3.500"/><circle cx="5" cy="9.500" r="3.500"/><circle cx="13" cy="9.500" r="3.500"/><path d="M8.300 7h1.400v6.500l3 2.500h-7.400l3-2.500z"/></svg></button>
      </div>
      <div>
        <div class="h-[9px] pt-[3px]"><svg class="mx-auto h-1 w-[18px]"><use href="#grip"/></svg></div>
        <button aria-label="Trazo"><svg viewBox="0 0 18 18" fill="currentColor"><path d="M1 3h16v1H1zM1 7h16v2H1zM1 12h16v2H1z"/></svg></button>
        <button aria-label="Degradado"><svg viewBox="0 0 18 18"><path d="M2 3.500h14v10H2z" fill="url(#g1)" stroke="#d0d0d0"/></svg></button>
        <button aria-label="Transparencia"><svg viewBox="0 0 18 18"><circle cx="6.500" cy="6.500" r="5.800" fill="currentColor"/><circle cx="11" cy="11" r="5.300" fill="#8a8a8a" fill-opacity=".85" stroke="#c0c0c0"/></svg></button>
      </div>
      <div>
        <div class="h-[9px] pt-[3px]"><svg class="mx-auto h-1 w-[18px]"><use href="#grip"/></svg></div>
        <button aria-label="Apariencia"><svg viewBox="0 0 18 18"><circle cx="9" cy="9" r="5.300" fill="currentColor"/><circle cx="9" cy="9" r="7.500" fill="none" stroke="currentColor" stroke-width="1.200" stroke-dasharray="1.300 1.650"/></svg></button>
        <button aria-label="Estilos gráficos"><svg viewBox="0 0 18 18" fill="none" stroke="currentColor" stroke-width="1.300"><path d="M5 8V2h11v11h-6M1.500 8.500h4.500v4.500H1.500z"/><path d="M4.500 11.500H9v4.500H4.500z"/></svg></button>
      </div>
      <div>
        <div class="h-[9px] pt-[3px]"><svg class="mx-auto h-1 w-[18px]"><use href="#grip"/></svg></div>
        <button aria-label="Capas" aria-pressed="true" class="bg-[#353535] bg-clip-content py-[3px]"><svg viewBox="0 0 18 18" fill="#d8d8d8"><path d="m9 1 8 5-8 5-8-5zM3.500 9.500 9 13l5.500-3.500L17 11l-8 5.500L1 11z"/></svg></button>
        <button aria-label="Exportación de recursos"><svg><use href="#export"/></svg></button>
        <button aria-label="Mesas de trabajo"><svg viewBox="0 0 18 18" fill="none" stroke="currentColor" stroke-width="1.300"><path d="M5 12.500H1.500v-11h9v5M5 6.500h11v9H5z"/></svg></button>
      </div>
    </aside>

    <section aria-label="Propiedades" class="flex min-w-0 flex-1 flex-col">
      <div class="flex h-6 shrink-0 bg-[#454545] font-bold text-[#a8a8a8]">
        <button class="w-[66px] bg-[#535353] text-white">Propiedades</button>
        <button class="w-[63px] border-b border-r border-[#3f3f3f] bg-[#4a4a4a]">Bibliotecas</button>
        <i class="flex-1 border-b border-[#3f3f3f]"></i>
      </div>
      <div class="mr-3 border-b border-[#494949] pb-[5px] pl-[9px] pt-2 font-medium text-[#c4c4c4]">Grupo</div>

      <div class="mr-3 border-b border-[#494949] pl-[9px] pt-2">
        <h2 class="font-medium text-[#c4c4c4]">Transform</h2>
        <div class="mt-px flex items-center">
          <button aria-label="Punto de referencia" class="mb-[22px] h-[18px] w-[18px]"><svg viewBox="0 0 18 18" fill="none" stroke="#d0d0d0"><path d="M3 2.500h12M3 9h12M3 15.500h12M2.500 3v12M9 3v12M15.500 3v12" stroke-width=".8"/><path fill="#535353" d="M1 1h3.500v3.500H1zM7.200 1h3.500v3.500H7.200zM13.500 1H17v3.500h-3.500zM1 7.200h3.500v3.500H1zM13.500 7.200H17v3.500h-3.500zM1 13.500h3.500V17H1zM7.200 13.500h3.500V17H7.200zM13.500 13.500H17V17h-3.500z"/><path fill="#fff" stroke="none" d="M6.500 6.500h5v5h-5z"/></svg></button>
          <div class="grid flex-1 grid-cols-[23px_50px_32px_50px] grid-rows-[23px_23px_23px] items-center">
            <label for="x" class="pl-2 font-medium">X:</label><input id="x" value="894.8305 p" class="h-[18px] min-w-0 rounded-xs border border-[#626262] bg-[#464646] pl-[3px] text-[9px] text-white">
            <label for="w" class="pl-[14px] font-medium">W:</label><input id="w" value="1200 px" class="h-[18px] min-w-0 rounded-xs border border-[#626262] bg-[#464646] pl-[3px] text-[9px] text-white">
            <label for="y" class="pl-2 font-medium">Y:</label><input id="y" value="917.5424 p" class="h-[18px] min-w-0 rounded-xs border border-[#626262] bg-[#464646] pl-[3px] text-[9px] text-white">
            <label for="h" class="pl-[14px] font-medium">H:</label><input id="h" value="1200 px" class="h-[18px] min-w-0 rounded-xs border border-[#626262] bg-[#464646] pl-[3px] text-[9px] text-white">
            <div class="col-span-2 flex items-center">
              <label for="ang" aria-label="Ángulo" class="ml-[5px] flex w-[14px] items-center"><svg class="h-[10px] w-[11px]" viewBox="0 0 11 10" fill="none" stroke="#ccc" stroke-width="1.200"><path d="M8.500 1 1 8.500h9.500M5 4.500c2 1 2.500 2.500 2.500 4"/></svg>:</label>
              <div class="flex h-[18px] items-center rounded-xs border border-[#626262]"><input id="ang" value="0°" class="h-4 w-[32px] bg-[#464646] pl-[3px] text-[9px] text-white"><button aria-label="Lista de ángulos" class="flex w-[15px] justify-center"><svg class="h-[6px] w-2 text-white"><use href="#down"/></svg></button></div>
            </div>
            <div class="col-span-2 flex gap-2 pl-[33px]">
              <button aria-label="Voltear horizontalmente" class="h-[14px] w-[14px]"><svg viewBox="0 0 14 14" fill="none" stroke="#ccc"><path d="M1.500 3v8l4-4z"/><path fill="#ccc" d="M12.500 3v8l-4-4z"/><path d="M7 1v12" stroke-dasharray="2 1"/></svg></button>
              <button aria-label="Voltear verticalmente" class="h-[14px] w-[14px]"><svg viewBox="0 0 14 14" fill="none" stroke="#ccc"><path fill="#ccc" d="M3 1.500h8l-4 4z"/><path d="M3 12.500h8l-4-4z"/><path d="M1 7h12" stroke-dasharray="2 1"/></svg></button>
            </div>
          </div>
          <button aria-label="Restringir proporciones" class="mb-[22px] mr-[2px] h-4 w-4"><svg viewBox="0 0 16 16" fill="none" stroke="#c8c8c8" stroke-width="1.300"><path d="M5 7V4a2.500 2.500 0 0 1 5 0v2M5 9.500v2.500a2.500 2.500 0 0 0 5 0v-2M2 1l12 14"/></svg></button>
        </div>
        <button aria-label="Más opciones de transformación" class="ml-auto mr-[6px] flex h-4 items-center"><svg class="h-1 w-3 text-[#ddd]"><use href="#dots"/></svg></button>
      </div>

      <div class="mr-3 border-b border-[#494949] pl-[9px] pt-2">
        <h2 class="font-medium text-[#c4c4c4]">Appearance</h2>
        <div class="mt-1 grid grid-cols-[26px_45px_1fr] grid-rows-[26px_26px_26px_30px] items-center">
          <button aria-label="Fill" class="h-4 w-4 border border-[#2c2c2c]"><svg class="h-full w-full"><use href="#none"/></svg></button><span class="col-span-2 font-medium text-[#c4c4c4]">Fill</span>
          <button aria-label="Stroke" class="h-4 w-4 border border-[#2c2c2c]"><svg class="h-full w-full"><use href="#strk"/></svg></button>
          <label for="sw" class="leading-3"><span class="border-b border-dotted border-[#ccc] font-bold text-white">Stroke</span></label>
          <div class="flex h-[18px] w-fit items-center border border-[#5e5e5e]"><button aria-label="Ajustar grosor" class="w-[14px]"><svg class="mx-auto h-[14px] w-[10px] text-white"><use href="#spin"/></svg></button><input id="sw" value="1 pt" class="h-4 w-[29px] bg-[#464646] pl-[3px] text-[9px] text-white"><button aria-label="Grosores" class="flex w-4 justify-center"><svg class="h-[6px] w-2 text-white"><use href="#down"/></svg></button></div>
          <svg class="h-[15px] w-[15px]" viewBox="0 0 15 15"><path d="M.5.500h14v14H.5z" fill="#555" stroke="#aaa"/><path fill="#808080" d="M1 1h3v3H1zM7.500 1h3v3h-3zM4 4h3.500v3.500H4zM10.500 4H14v3.500h-3.500zM1 7.500h3v3H1zM7.500 7.500h3v3h-3zM4 10.500h3.500V14H4zM10.500 10.500H14V14h-3.500z"/></svg>
          <label for="op" class="leading-3"><span class="border-b border-dotted border-[#ccc] font-bold text-white">Opacity</span></label>
          <div class="flex h-[18px] w-fit items-center border border-[#5e5e5e]"><input id="op" value="100%" class="h-4 w-[43px] bg-[#464646] pl-[2px] text-[9px] text-white"><button aria-label="Control de opacidad" class="flex w-4 justify-center"><svg class="h-2 w-[6px] text-white"><use href="#right"/></svg></button></div>
          <button class="col-span-3 pl-[5px] pt-1 text-left text-[12px] italic">fx.</button>
        </div>
        <button aria-label="Más opciones de apariencia" class="ml-auto mr-[6px] flex h-4 items-center"><svg class="h-1 w-3 text-[#ddd]"><use href="#dots"/></svg></button>
      </div>

      <div class="mr-3 border-b border-[#494949] pl-[9px] pt-2">
        <h2 class="font-medium text-[#c4c4c4]">Pathfinder</h2>
        <div class="flex justify-between pb-px">
          <div class="flex gap-[14px] pl-[5px] pt-3 [&_svg]:h-[14px] [&_svg]:w-[14px]">
            <button aria-label="Unir" class="h-[14px]"><svg viewBox="0 0 14 14" fill="#d0d0d0"><path d="M0 1h9v4h4v9H4v-4H0z"/></svg></button>
            <button aria-label="Menos frente" class="h-[14px]"><svg viewBox="0 0 14 14"><path fill="#d0d0d0" d="M0 1h9v4H4v5H0z"/><path d="M4.500 5.500h8v8h-8z" fill="none" stroke="#d0d0d0"/></svg></button>
            <button aria-label="Formar intersección" class="h-[14px]"><svg viewBox="0 0 14 14" fill="none" stroke="#d0d0d0"><path d="M.5 1.500h8v8h-8zM4.500 5.500h8v8h-8z"/><path fill="#aaa" d="M4.500 5.500h4v4h-4z"/></svg></button>
            <button aria-label="Excluir" class="h-[14px]"><svg viewBox="0 0 14 14" fill="#d0d0d0" fill-rule="evenodd"><path d="M0 1h9v4h4v9H4v-4H0zM5 6v4h4V6z"/></svg></button>
          </div>
          <div>
            <button disabled class="mt-[3px] block h-[19px] w-[57px] rounded-xs bg-[#585858] text-[9px] text-[#7a7a7a]">Expand</button>
            <button aria-label="Más opciones de Pathfinder" class="ml-auto mr-[6px] mt-[2px] flex h-4 items-center"><svg class="h-1 w-3 text-[#ddd]"><use href="#dots"/></svg></button>
          </div>
        </div>
      </div>

      <div class="mr-3 pl-[9px] pt-[13px]">
        <h2 class="font-medium text-[#c4c4c4]">Quick Actions</h2>
        <div class="mt-2 grid grid-cols-2 gap-2 font-bold text-white [&_button]:h-[19px] [&_button]:rounded-xs [&_button]:border [&_button]:border-[#7a7a7a]">
          <button>Offset Path</button><button>Ungroup</button>
          <button class="col-span-2">Recolor</button>
          <div class="col-span-2 flex"><button class="flex-1">Start Global Edit</button><button aria-label="Opciones de edición global" class="flex w-[19px] items-center justify-center"><svg class="h-[6px] w-2"><use href="#down"/></svg></button></div>
        </div>
      </div>
    </section>
  </div>
</div>
</main>
</div>
</body>
</html>
